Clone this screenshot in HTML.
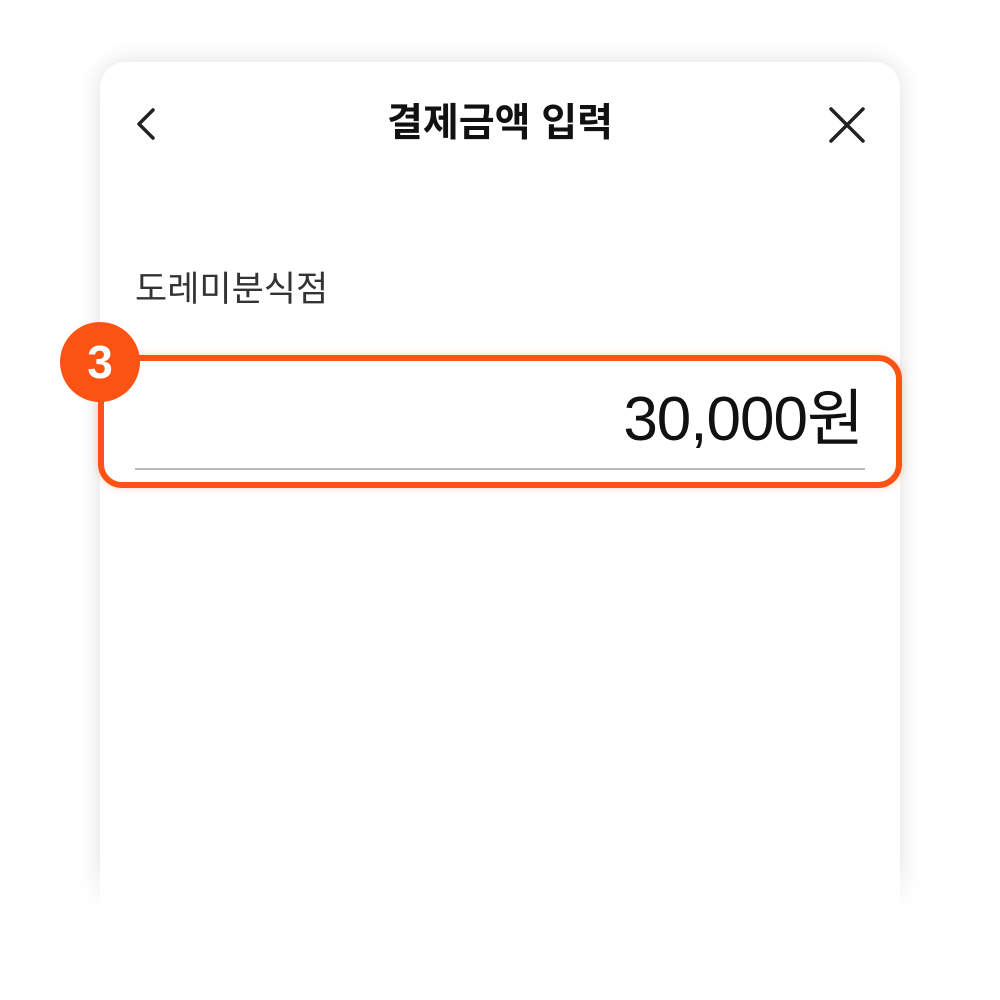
<!DOCTYPE html>
<html><head><meta charset="utf-8"><style>
html,body{margin:0;padding:0;background:#fff;width:1000px;height:1000px;overflow:hidden;position:relative;font-family:"Liberation Sans","Noto Sans CJK KR",sans-serif}
.card{position:absolute;left:100px;top:62px;width:800px;height:900px;background:#fff;border-radius:26px;box-shadow:0 0 24px rgba(0,0,0,0.13)}
.fade{position:absolute;left:0;top:860px;width:1000px;height:140px;background:linear-gradient(rgba(255,255,255,0),#fff 50px)}
.title{position:absolute;left:0;width:1000px;top:98px;text-align:center;font-size:39px;font-weight:bold;color:#111;line-height:52px}
.store{position:absolute;left:135px;top:266px;font-size:35px;color:#333;line-height:48px}
.box{position:absolute;left:98px;top:355px;width:792px;height:121px;border:6px solid #fa5314;border-radius:24px;box-shadow:0 0 8px rgba(250,83,20,0.25)}
.amt{position:absolute;right:137px;top:384px;font-size:62px;color:#111;line-height:72px;letter-spacing:-1px}
.line{position:absolute;left:135px;top:468px;width:730px;height:2px;background:#bbb}
.badge{position:absolute;left:60px;top:322px;width:80px;height:80px;border-radius:50%;background:#fa5314;color:#fff;font-weight:bold;font-size:46px;line-height:80px;text-align:center}
</style></head><body>
<div class="card"></div>
<div class="fade"></div>
<div class="title">결제금액 입력</div>
<svg style="position:absolute;left:127px;top:104px" width="40" height="40"><path d="M26 6 L12 20 L26 34" fill="none" stroke="#222" stroke-width="3.5" stroke-linecap="round" stroke-linejoin="round"/></svg>
<svg style="position:absolute;left:826px;top:104px" width="42" height="42"><path d="M5 5 L37 37 M37 5 L5 37" fill="none" stroke="#222" stroke-width="3.5" stroke-linecap="round"/></svg>
<div class="store">도레미분식점</div>
<div class="box"></div>
<div class="amt">30,000원</div>
<div class="line"></div>
<div class="badge">3</div>
</body></html>
